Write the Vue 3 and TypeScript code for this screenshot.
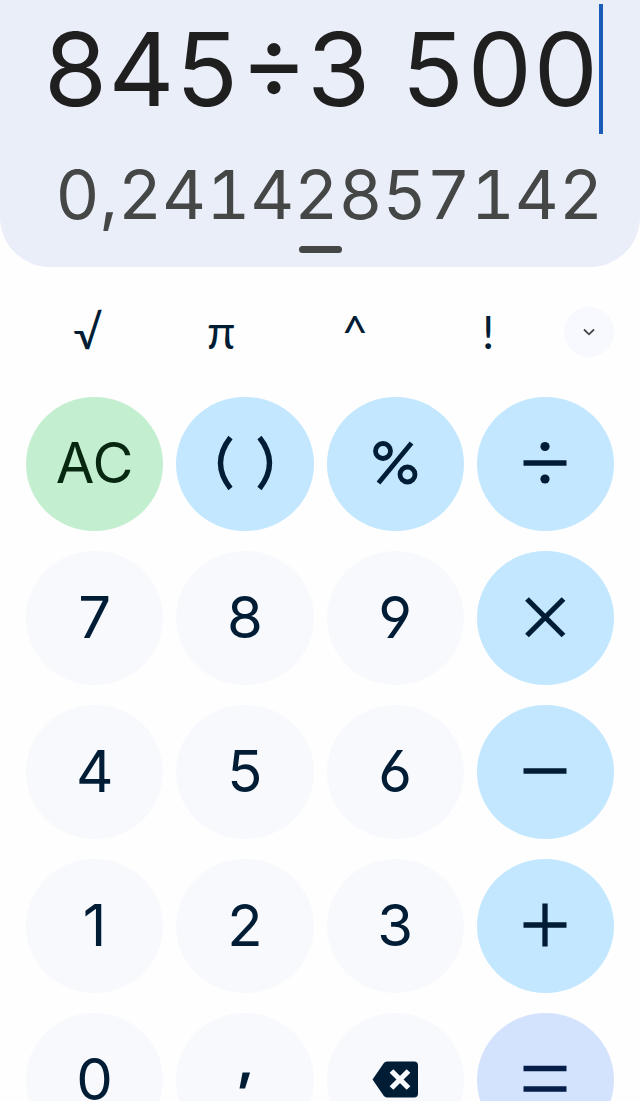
<script setup lang="ts">
import { ref } from 'vue'

type Tone = 'digit' | 'operator' | 'clear' | 'equals'

interface Key {
  id: string
  name: string
  tone: Tone
  label?: string
  icon?: string
}

const expression = ref('845÷3 500')
const result = ref('0,24142857142')
const expanded = ref(false)

const functions = [
  { label: '√', name: 'Square root', id: 'root' },
  { label: 'π', name: 'Pi', id: 'pi' },
  { label: '^', name: 'Power', id: 'power' },
  { label: '!', name: 'Factorial', id: 'factorial' },
]

const digit = (value: string): Key => ({ id: 'n' + value, name: value, label: value, tone: 'digit' })

const keys: Key[] = [
  { id: 'clear', name: 'All clear', label: 'AC', tone: 'clear' },
  { id: 'parens', name: 'Parentheses', icon: 'parens', tone: 'operator' },
  { id: 'percent', name: 'Percent', icon: 'percent', tone: 'operator' },
  { id: 'divide', name: 'Divide', icon: 'divide', tone: 'operator' },
  digit('7'),
  digit('8'),
  digit('9'),
  { id: 'multiply', name: 'Multiply', icon: 'multiply', tone: 'operator' },
  digit('4'),
  digit('5'),
  digit('6'),
  { id: 'minus', name: 'Minus', icon: 'minus', tone: 'operator' },
  digit('1'),
  digit('2'),
  digit('3'),
  { id: 'plus', name: 'Plus', icon: 'plus', tone: 'operator' },
  digit('0'),
  { id: 'comma', name: 'Decimal comma', icon: 'comma', tone: 'digit' },
  { id: 'delete', name: 'Delete', icon: 'delete', tone: 'digit' },
  { id: 'equals', name: 'Equals', icon: 'equals', tone: 'equals' },
]

const symbols: Record<string, string> = {
  parens: '(',
  percent: '%',
  divide: '÷',
  multiply: '×',
  minus: '−',
  plus: '+',
  comma: ',',
}

function press(key: Key) {
  if (key.id === 'clear') {
    expression.value = ''
    result.value = ''
  } else if (key.id === 'delete') {
    expression.value = expression.value.slice(0, -1)
  } else if (key.id === 'equals') {
    expression.value = result.value
  } else {
    expression.value += key.label ?? symbols[key.id] ?? ''
  }
}
</script>

<template>
  <main class="calculator">
    <section class="display">
      <div class="entry">
        <input v-model="expression" class="expression" type="text" aria-label="Expression" readonly />
        <span class="caret"></span>
      </div>
      <output class="result">{{ result }}</output>
      <span class="handle"></span>
    </section>

    <div class="functions">
      <button
        v-for="fn in functions"
        :key="fn.id"
        class="function"
        type="button"
        :aria-label="fn.name"
        @click="expression += fn.label"
      >
        {{ fn.label }}
      </button>
      <button
        class="toggle"
        type="button"
        aria-label="More functions"
        :aria-expanded="expanded"
        @click="expanded = !expanded"
      >
        <svg class="chevron" viewBox="0 0 12 8"><path d="M1 1.5 6 6.3 11 1.5" /></svg>
      </button>
    </div>

    <div class="keypad">
      <button
        v-for="key in keys"
        :key="key.id"
        class="key"
        :class="key.tone"
        type="button"
        :aria-label="key.name"
        @click="press(key)"
      >
        <template v-if="key.label">{{ key.label }}</template>
        <svg v-else class="icon" viewBox="0 -1 60 60">
          <template v-if="key.icon === 'parens'">
            <path d="M15.5 3.5Q-4.5 29 15.5 54.5M44.5 3.5Q64.5 29 44.5 54.5" />
          </template>
          <g v-else-if="key.icon === 'percent'" class="fine">
            <circle cx="18" cy="17" r="7.5" />
            <circle cx="42.5" cy="40.5" r="7.5" />
            <path d="M46.5 9 13.5 49" />
          </g>
          <template v-else-if="key.icon === 'divide'">
            <path d="M8.5 29h43" />
            <circle class="dot" cx="30" cy="12.5" r="4.6" />
            <circle class="dot" cx="30" cy="45" r="4.6" />
          </template>
          <path v-else-if="key.icon === 'multiply'" d="m12 11 36.5 36.5M48.5 11 12 47.5" />
          <path v-else-if="key.icon === 'minus'" d="M8.5 29h43" />
          <path v-else-if="key.icon === 'plus'" d="M8.5 29h43M30 7.5v43" />
          <path v-else-if="key.icon === 'equals'" d="M8.5 18.5h43M8.5 39h43" />
          <path v-else-if="key.icon === 'comma'" class="dot" d="M27.5 22.5H35L30 38.5H24.5Z" />
          <template v-else>
            <path
              class="dot"
              d="M7.5 29.5 18.5 13.5Q20 11.5 22 11.5H49Q53 11.5 53 15.5V43.5Q53 47.5 49 47.5H22Q20 47.5 18.5 45.5Z"
            />
            <path class="cross" d="m26.5 21 17 17M43.5 21l-17 17" />
          </template>
        </svg>
      </button>
    </div>
  </main>
</template>

<style>
body {
  margin: 0;
  background: #fefefe;
}
</style>

<style scoped>
.calculator {
  height: 100vh;
  overflow: hidden;
  font-family: Inter, 'Liberation Sans', sans-serif;
  color: #001d35;
}

button {
  margin: 0;
  padding: 0;
  border: 0;
  background: none;
  font: inherit;
  color: inherit;
  cursor: pointer;
}

.display {
  display: flex;
  flex-direction: column;
  padding: 4px 37px 14px;
  border-radius: 0 0 50px 50px;
  background: #eaeef9;
}

.entry {
  display: flex;
  height: 130px;
}

.expression {
  flex: 1;
  min-width: 0;
  padding: 0;
  border: 0;
  outline: 0;
  background: none;
  font-family: Inter, sans-serif;
  font-feature-settings: 'tnum';
  font-size: 102px;
  line-height: 130px;
  text-align: right;
  color: #1f1f1f;
}

.caret {
  width: 4px;
  background: #1a5cb8;
}

.result {
  height: 80px;
  margin-top: 20px;
  font-feature-settings: 'tnum';
  font-size: 68px;
  line-height: 80px;
  text-align: right;
  white-space: nowrap;
  color: #444746;
}

.handle {
  align-self: center;
  width: 43px;
  height: 7px;
  margin-top: 12px;
  border-radius: 4px;
  background: #444746;
}

.functions {
  display: flex;
  height: 50px;
  padding: 0 26px 0 21px;
  margin: 40px 0;
}

.function {
  flex: 1;
  font-family: Lato, sans-serif;
  font-size: 46px;
  line-height: 50px;
}

.toggle {
  display: flex;
  align-items: center;
  justify-content: center;
  width: 50px;
  margin-left: 9px;
  border-radius: 50%;
  background: #f7f9fe;
}

.chevron {
  width: 12px;
  height: 8px;
  fill: none;
  stroke: #444746;
  stroke-width: 1.8;
}

.keypad {
  display: grid;
  grid-template-columns: repeat(4, 1fr);
  gap: 20px 13px;
  padding: 0 26px;
}

.key {
  display: flex;
  align-items: center;
  justify-content: center;
  height: 134px;
  padding-bottom: 3px;
  border-radius: 50%;
  font-size: 58px;
  line-height: 64px;
  font-feature-settings: 'cv03', 'cv04';
}

.digit {
  background: #f7f9fd;
}

.operator {
  background: #c2e7ff;
}

.clear {
  background: #c4eed0;
  font-size: 56px;
  color: #072711;
}

.equals {
  background: #d3e3fd;
  color: #041e49;
}

.icon {
  width: 60px;
  height: 60px;
  fill: none;
  stroke: currentColor;
  stroke-width: 5.3;
}

.fine {
  stroke-width: 4.8;
}

.dot {
  fill: currentColor;
  stroke: none;
}

.cross {
  stroke: #f7f9fd;
}
</style>
